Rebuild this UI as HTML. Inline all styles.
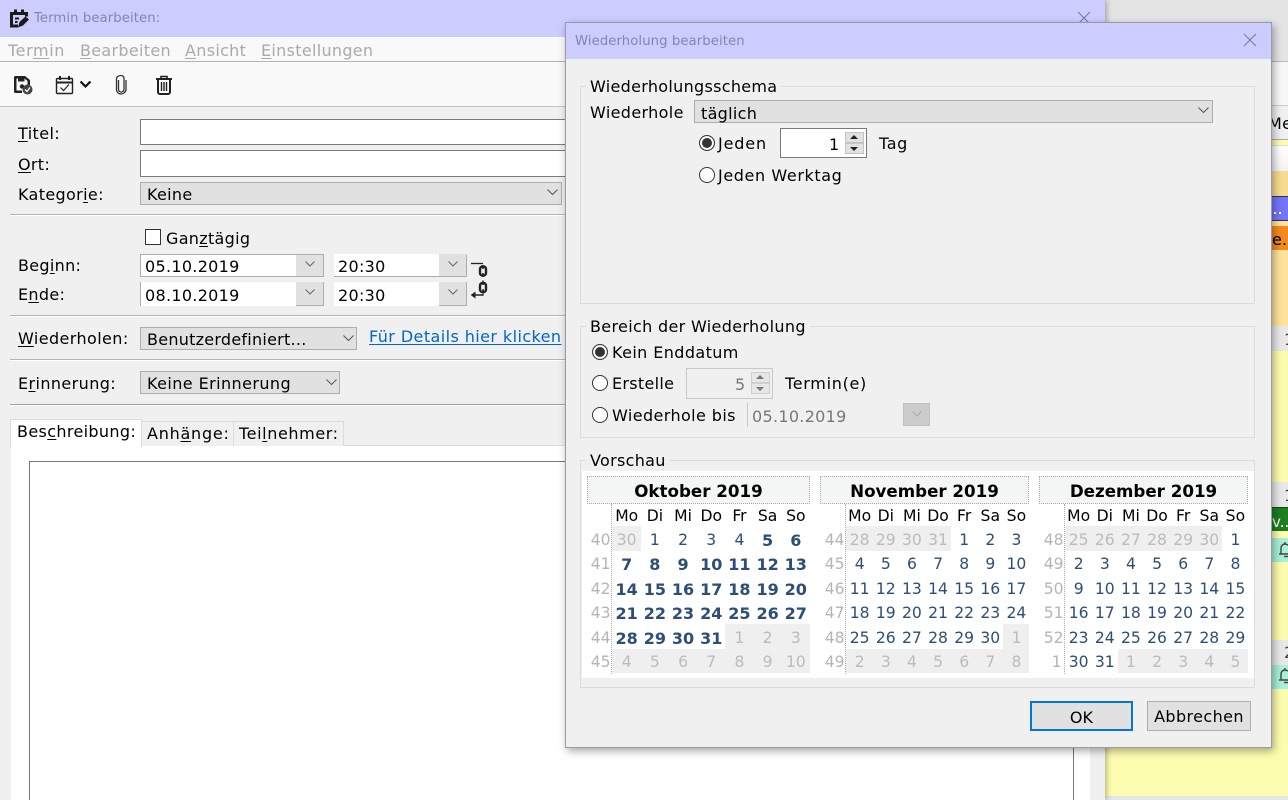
<!DOCTYPE html>
<html><head><meta charset="utf-8"><style>
html,body{margin:0;padding:0;width:1288px;height:800px;overflow:hidden;background:#fdfdb0}
body{position:relative;font-family:"DejaVu Sans","Liberation Sans",sans-serif;font-size:16px;color:#000}
.a,.t,.i{position:absolute}
.t{white-space:nowrap;line-height:20px;letter-spacing:.3px;margin-top:1px}
u{text-underline-offset:2px;text-decoration-thickness:1px}
.sel{position:absolute;box-sizing:border-box;background:#e1e1e1;border:1px solid #adadad}
.inp{position:absolute;box-sizing:border-box;background:#fff;border:1px solid #7a7a7a}
.line{position:absolute;height:1px;background:#b4b4b4;box-shadow:0 1px 0 #fff}
.gb{position:absolute;box-sizing:border-box;border:1px solid #dcdcdc}
.lg{position:absolute;background:#f0f0f0;padding:0 4px;height:20px;line-height:22px;white-space:nowrap;letter-spacing:.3px}
.mh{position:absolute;box-sizing:border-box;top:476px;height:28px;background:#f4f6f6;border:1px dotted #aaa;text-align:center;font-weight:bold;font-size:16.7px;line-height:28px;white-space:nowrap}
.vd{position:absolute;top:504px;height:170px;border-left:1px dotted #aaa}
.r{position:absolute;display:flex;height:24px;line-height:25px;font-size:15.6px;color:#2d4e75;white-space:nowrap;margin-left:.6px}
.r span{display:block;text-align:center;flex:none}
.r .w{position:absolute;left:-40px;width:38px;text-align:right;color:#b5b5b5}
.r .b{font-weight:bold;font-size:16px}
.r .g{color:#bbb}
.bg{position:absolute;background:#efefef}
.o span{width:28.2px}.n span{width:26.14px}
.rad{position:absolute;box-sizing:border-box;width:16px;height:16px;border:1px solid #333;border-radius:50%;background:#fff}
.rad.on{background:#333;box-shadow:inset 0 0 0 2px #fff}
</style></head><body>

<!-- right background window -->
<div class="a" style="left:1105px;top:0;width:183px;height:61px;background:#e4e4e4"></div>
<div class="a" style="left:1105px;top:61px;width:183px;height:1px;background:#bbb"></div>
<div class="a" style="left:1105px;top:62px;width:183px;height:43px;background:#f8f8f8"></div>
<div class="a" style="left:1105px;top:105px;width:183px;height:1px;background:#ccc"></div>
<div class="a" style="left:1105px;top:106px;width:183px;height:33px;background:#f0f0f0"></div>
<div class="t" style="left:1268px;top:113px">Me</div>
<div class="a" style="left:1105px;top:139px;width:183px;height:1px;background:#aaa"></div>
<div class="a" style="left:1105px;top:145px;width:183px;height:26px;background:linear-gradient(#fff,#f2f2f2);border-top:1px solid #ddd"></div>
<div class="a" style="left:1105px;top:171px;width:183px;height:155px;background:#fde49a"></div>
<div class="a" style="left:1105px;top:171px;width:183px;height:25px;background:#f5dc90"></div>
<div class="a" style="left:1271px;top:196px;width:17px;height:25px;background:#7474f8;box-sizing:border-box;border-top:1px solid #334;border-bottom:1px solid #334"></div>
<div class="a" style="left:1274px;top:212px;width:2px;height:2px;background:#fff"></div>
<div class="a" style="left:1279px;top:212px;width:2px;height:2px;background:#fff"></div>
<div class="a" style="left:1271px;top:226px;width:17px;height:24px;background:#f58a1c"></div>
<div class="t" style="left:1272px;top:229px;letter-spacing:0">e..</div>
<div class="a" style="left:1105px;top:326px;width:183px;height:25px;background:#e8e8e8"></div>
<div class="t" style="left:1284px;top:329px;color:#444">1</div>
<div class="a" style="left:1105px;top:351px;width:183px;height:445px;background:#fdfdb0"></div>
<div class="a" style="left:1105px;top:482px;width:183px;height:25px;background:#e8e8e8"></div>
<div class="t" style="left:1284px;top:485px;color:#444">1</div>
<div class="a" style="left:1271px;top:507px;width:17px;height:24px;background:#1f7e1f;border-top:1px solid #0a4a0a;box-sizing:border-box"></div>
<div class="t" style="left:1272px;top:511px;color:#fff;letter-spacing:0;font-size:15px">v..</div>
<div class="a" style="left:1271px;top:538px;width:17px;height:24px;background:#a8f0d8"></div>
<svg class="i" style="left:1278px;top:541px" width="10" height="18" viewBox="0 0 10 18" fill="none" stroke="#444" stroke-width="1.4"><path d="M1 13H10M3 13V7C3 4.500 5 3 7 3V1M7 3C8 3 9 3.500 10 4M6 15.500H10"/></svg>
<div class="a" style="left:1105px;top:640px;width:183px;height:25px;background:#e8e8e8"></div>
<div class="t" style="left:1284px;top:642px;color:#444">2</div>
<div class="a" style="left:1271px;top:665px;width:17px;height:24px;background:#a8f0d8"></div>
<svg class="i" style="left:1278px;top:667px" width="10" height="18" viewBox="0 0 10 18" fill="none" stroke="#444" stroke-width="1.4"><path d="M1 13H10M3 13V7C3 4.500 5 3 7 3V1M7 3C8 3 9 3.500 10 4M6 15.500H10"/></svg>
<div class="a" style="left:1105px;top:796px;width:183px;height:4px;background:#e6e6e6"></div>

<!-- main window -->
<div class="a" style="left:0;top:0;width:1105px;height:800px;background:#f0f0f0;box-shadow:1px 0 6px rgba(0,0,0,.35)"></div>
<div class="a" style="left:0;top:0;width:1105px;height:37px;background:#ccccff"></div>
<svg class="i" style="left:10px;top:9px" width="19" height="19" viewBox="0 0 19 19"><path d="M0 3H18V7.500H15V6H3V15.500H8V18.500H0Z" fill="#1a1a1a"/><rect x="4" y="0.500" width="3" height="4" fill="#1a1a1a"/><rect x="11" y="0.500" width="3" height="4" fill="#1a1a1a"/><path d="M8 18.500L9.500 13L15.500 7.500L19 10.500L13 16.500Z" fill="#1a1a1a"/><path d="M5 8.500H9V10.500H5ZM5 12H7.500V14H5Z" fill="#1a1a1a"/></svg>
<div class="t" style="left:34px;top:8px;font-size:13.2px;letter-spacing:.1px;color:#8585aa">Termin bearbeiten:</div>
<svg class="i" style="left:1077px;top:11px" width="14" height="14" stroke="#777799" fill="none"><path d="M1 1L13 13M13 1L1 13"/></svg>
<div class="a" style="left:0;top:37px;width:1105px;height:24px;background:#f9f9f9"></div>
<div class="a" style="left:0;top:61px;width:1105px;height:1px;background:#b4b4b4"></div>
<div class="a" style="left:0;top:62px;width:1105px;height:44px;background:#f9f9f9"></div>
<div class="a" style="left:0;top:106px;width:1105px;height:1px;background:#c4c4c4"></div>
<div class="t" style="left:8px;top:40px;color:#aaa;letter-spacing:.6px">Ter<u>m</u>in</div>
<div class="t" style="left:80px;top:40px;color:#aaa"><u>B</u>earbeiten</div>
<div class="t" style="left:185px;top:40px;color:#aaa"><u>A</u>nsicht</div>
<div class="t" style="left:261px;top:40px;color:#aaa"><u>E</u>instellungen</div>

<!-- toolbar icons -->
<svg class="i" style="left:13px;top:75px" width="20" height="20" viewBox="0 0 20 20"><path d="M2.500 1H12L17 5V10H14.500V6L11.500 3.500V6.500H5V3.500H3.500V15.500H9V18H2.500A1.500 1.500 0 0 1 1 16.500V2.500A1.500 1.500 0 0 1 2.500 1Z" fill="#222"/><circle cx="9" cy="11.500" r="2.200" fill="#222"/><circle cx="14.500" cy="14.500" r="5" fill="#444"/><path d="M12 14.500L14 16.500L17 12.500" fill="none" stroke="#fff" stroke-width="1.300"/></svg>
<svg class="i" style="left:55px;top:75px" width="19" height="20" viewBox="0 0 19 20" fill="none" stroke="#222"><path d="M2.500 3.500H16.500A1 1 0 0 1 17.500 4.500V17.500A1 1 0 0 1 16.500 18.500H2.500A1 1 0 0 1 1.500 17.500V4.500A1 1 0 0 1 2.500 3.500Z" stroke-width="1.400"/><path d="M1.500 7.500H17.500" stroke-width="2"/><path d="M5 1V5M14 1V5" stroke-width="2"/><path d="M5.500 12.500L8.500 15.500L14 9.500" stroke-width="1.200"/></svg>
<svg class="i" style="left:79px;top:80px" width="13" height="9" viewBox="0 0 13 9" fill="none" stroke="#111" stroke-width="2.200"><path d="M1.500 1.500L6.500 6.500L11.500 1.500"/></svg>
<svg class="i" style="left:114px;top:74px" width="14" height="21" viewBox="0 0 14 21" fill="none" stroke="#333" stroke-width="1.300"><path d="M4.500 6V15C4.500 17 5.500 18 7.200 18S10 17 10 15V4.500C10 2.500 8.800 1.500 7 1.500S2.500 2.500 2.500 5V15.500C2.500 18 4.500 20 7 20S12 18 12 15.500V6"/></svg>
<svg class="i" style="left:155px;top:75px" width="18" height="20" viewBox="0 0 18 20" fill="none" stroke="#222"><path d="M1 4H17" stroke-width="2"/><path d="M6 3.500V1.500H12V3.500" stroke-width="1.600"/><path d="M3 4.500V17A2 2 0 0 0 5 19H13A2 2 0 0 0 15 17V4.500" stroke-width="2"/><path d="M6.500 7V16M9 7V16M11.500 7V16" stroke-width="1.400"/></svg>

<!-- form -->
<div class="t" style="left:18px;top:123px;letter-spacing:.4px"><u>T</u>itel:</div>
<div class="inp" style="left:140px;top:119px;width:440px;height:26px"></div>
<div class="t" style="left:18px;top:154px"><u>O</u>rt:</div>
<div class="inp" style="left:140px;top:150px;width:440px;height:27px"></div>
<div class="t" style="left:18px;top:184px;letter-spacing:.35px">Kategor<u>i</u>e:</div>
<div class="sel" style="left:140px;top:182px;width:422px;height:23px"></div>
<div class="t" style="left:147px;top:184px">Keine</div>
<svg class="i" style="left:547px;top:189px" width="11" height="7" fill="none" stroke="#555"><path d="M.5 .5L5.500 5.500L10.500 .5"/></svg>
<div class="line" style="left:10px;top:214px;width:555px"></div>

<div class="a" style="left:145px;top:229px;width:16px;height:16px;box-sizing:border-box;border:1px solid #333;background:#fff"></div>
<div class="t" style="left:166px;top:228px">Gan<u>z</u>tägig</div>

<div class="t" style="left:18px;top:255px">Beg<u>i</u>nn:</div>
<div class="a" style="left:140px;top:254px;width:184px;height:23px;box-sizing:border-box;background:#fff;border:1px solid #adadad"></div>
<div class="a" style="left:296px;top:255px;width:27px;height:21px;background:#e1e1e1"></div>
<svg class="i" style="left:305px;top:261px" width="10" height="6" fill="none" stroke="#666"><path d="M.5 .5L5 5L9.500 .5"/></svg>
<div class="t" style="left:145px;top:256px">05.10.2019</div>
<div class="a" style="left:334px;top:254px;width:133px;height:23px;box-sizing:border-box;background:#fff;border:1px solid #adadad;border-left:0;border-top-color:#fff"></div>
<div class="a" style="left:439px;top:254px;width:27px;height:22px;background:#e1e1e1"></div>
<svg class="i" style="left:448px;top:261px" width="10" height="6" fill="none" stroke="#666"><path d="M.5 .5L5 5L9.500 .5"/></svg>
<div class="t" style="left:338px;top:256px">20:30</div>

<div class="t" style="left:18px;top:284px">E<u>n</u>de:</div>
<div class="a" style="left:140px;top:282px;width:184px;height:24px;box-sizing:border-box;background:#fff;border-left:1px solid #adadad"></div>
<div class="a" style="left:296px;top:282px;width:28px;height:24px;box-sizing:border-box;background:#e1e1e1;border:1px solid #adadad;border-left:0;border-top:0"></div>
<svg class="i" style="left:305px;top:289px" width="10" height="6" fill="none" stroke="#666"><path d="M.5 .5L5 5L9.500 .5"/></svg>
<div class="t" style="left:145px;top:285px">08.10.2019</div>
<div class="a" style="left:334px;top:282px;width:105px;height:24px;background:#fff"></div>
<div class="a" style="left:439px;top:282px;width:28px;height:24px;box-sizing:border-box;background:#e1e1e1;border:1px solid #adadad;border-left:0;border-top:0"></div>
<svg class="i" style="left:448px;top:289px" width="10" height="6" fill="none" stroke="#666"><path d="M.5 .5L5 5L9.500 .5"/></svg>
<div class="t" style="left:338px;top:285px">20:30</div>
<!-- chain icon -->
<svg class="i" style="left:470px;top:260px" width="20" height="40" viewBox="0 0 20 40" fill="none" stroke="#222"><path d="M1 3.500H13" stroke-width="1.300"/><rect x="10" y="6.500" width="6" height="9" rx="2.500" stroke-width="2.400"/><path d="M13 5V9M13 13V17" stroke-width="1.500"/><rect x="10" y="23" width="6" height="9" rx="2.500" stroke-width="2.400"/><path d="M13 20.500V25M13 29V33" stroke-width="1.500"/><path d="M13 33.500V35H3" stroke-width="1.400"/><path d="M5 32.500L1.500 35L5 37.500Z" fill="#222" stroke-width="1"/></svg>
<div class="line" style="left:10px;top:315px;width:555px"></div>

<div class="t" style="left:18px;top:328px;letter-spacing:.4px"><u>W</u>iederholen:</div>
<div class="sel" style="left:140px;top:327px;width:217px;height:23px"></div>
<div class="t" style="left:147px;top:329px;letter-spacing:.25px">Benutzerdefiniert...</div>
<svg class="i" style="left:343px;top:335px" width="11" height="7" fill="none" stroke="#555"><path d="M.5 .5L5.500 5.500L10.500 .5"/></svg>
<div class="t" style="left:369px;top:326px;color:#0066cc;letter-spacing:.42px"><u>Für Details hier klicken</u></div>
<div class="line" style="left:10px;top:359px;width:555px"></div>

<div class="t" style="left:18px;top:373px;letter-spacing:.4px">E<u>r</u>innerung:</div>
<div class="sel" style="left:140px;top:371px;width:200px;height:23px"></div>
<div class="t" style="left:147px;top:373px;letter-spacing:.42px">Keine Erinnerung</div>
<svg class="i" style="left:326px;top:379px" width="11" height="7" fill="none" stroke="#555"><path d="M.5 .5L5.500 5.500L10.500 .5"/></svg>
<div class="line" style="left:10px;top:404px;width:555px;background:#a0a0a0"></div>

<!-- tabs -->
<div class="a" style="left:11px;top:445px;width:1079px;height:355px;background:#fff;border-top:1px solid #dcdcdc"></div>
<div class="a" style="left:142px;top:421px;width:91px;height:24px;background:#f0f0f0;border-top:1px solid #dcdcdc"></div>
<div class="a" style="left:233px;top:421px;width:109px;height:24px;background:#f0f0f0;border:1px solid #dcdcdc;border-bottom:0"></div>
<div class="a" style="left:10px;top:419px;width:132px;height:28px;background:#fff;border:1px solid #dcdcdc;border-bottom:0;box-sizing:border-box"></div>
<div class="t" style="left:17px;top:421px;letter-spacing:.35px">Bes<u>c</u>hreibung:</div>
<div class="t" style="left:147px;top:423px;letter-spacing:.75px">Anh<u>ä</u>nge:</div>
<div class="t" style="left:239px;top:423px;letter-spacing:.6px">Tei<u>l</u>nehmer:</div>
<div class="a" style="left:29px;top:461px;width:1043px;height:339px;background:#fff;border:1px solid #777;border-bottom:0"></div>

<!-- dialog -->
<div class="a" style="left:565px;top:22px;width:705px;height:724px;background:#f0f0f0;border:1px solid #9a9aa8;box-shadow:2px 3px 8px rgba(0,0,0,.35)"></div>
<div class="a" style="left:566px;top:23px;width:705px;height:36px;background:#ccccff"></div>
<div class="t" style="left:575px;top:31px;font-size:13.2px;letter-spacing:.1px;color:#8585aa">Wiederholung bearbeiten</div>
<svg class="i" style="left:1243px;top:33px" width="14" height="14" stroke="#777799" fill="none"><path d="M1 1L13 13M13 1L1 13"/></svg>

<div class="gb" style="left:580px;top:86px;width:675px;height:218px"></div>
<div class="lg" style="left:586px;top:76px">Wiederholungsschema</div>
<div class="t" style="left:590px;top:102px;letter-spacing:.35px">Wiederhole</div>
<div class="sel" style="left:694px;top:100px;width:519px;height:23px"></div>
<div class="t" style="left:701px;top:103px">täglich</div>
<svg class="i" style="left:1198px;top:107px" width="11" height="7" fill="none" stroke="#555"><path d="M.5 .5L5.500 5.500L10.500 .5"/></svg>
<div class="rad on" style="left:699px;top:135px"></div>
<div class="t" style="left:718px;top:133px;letter-spacing:.85px">Jeden</div>
<div class="inp" style="left:780px;top:128px;width:87px;height:30px"></div>
<div class="t" style="left:829px;top:134px">1</div>
<div class="a" style="left:845px;top:132px;width:17px;height:9px;background:#e1e1e1;border:1px solid #c4c4c4"></div>
<div class="a" style="left:845px;top:143px;width:17px;height:9px;background:#e1e1e1;border:1px solid #c4c4c4"></div>
<svg class="i" style="left:849px;top:134px" width="10" height="18"><path d="M5 1L9 5H1Z M1 13H9L5 17Z" fill="#222"/></svg>
<div class="t" style="left:879px;top:133px;letter-spacing:.6px">Tag</div>
<div class="rad" style="left:699px;top:167px"></div>
<div class="t" style="left:718px;top:165px;letter-spacing:.6px">Jeden Werktag</div>

<div class="gb" style="left:580px;top:326px;width:675px;height:112px"></div>
<div class="lg" style="left:586px;top:316px;letter-spacing:.33px">Bereich der Wiederholung</div>
<div class="rad on" style="left:592px;top:344px"></div>
<div class="t" style="left:612px;top:342px;letter-spacing:.4px">Kein Enddatum</div>
<div class="rad" style="left:592px;top:375px"></div>
<div class="t" style="left:612px;top:373px">Erstelle</div>
<div class="a" style="left:686px;top:368px;width:85px;height:29px;border:1px solid #c8c8c8;background:#f0f0f0"></div>
<div class="t" style="left:735px;top:374px;color:#777">5</div>
<div class="a" style="left:751px;top:372px;width:17px;height:9px;background:#e6e6e6;border:1px solid #cfcfcf"></div>
<div class="a" style="left:751px;top:383px;width:17px;height:9px;background:#e6e6e6;border:1px solid #cfcfcf"></div>
<svg class="i" style="left:755px;top:374px" width="10" height="18"><path d="M5 1L9 5H1Z M1 13H9L5 17Z" fill="#777"/></svg>
<div class="t" style="left:785px;top:373px;letter-spacing:.7px">Termin(e)</div>
<div class="rad" style="left:592px;top:407px"></div>
<div class="t" style="left:612px;top:405px;letter-spacing:.4px">Wiederhole bis</div>
<div class="a" style="left:747px;top:403px;width:1px;height:24px;background:#c8c8c8"></div>
<div class="t" style="left:752px;top:406px;color:#777">05.10.2019</div>
<div class="a" style="left:903px;top:403px;width:27px;height:23px;background:#cccccc;box-shadow:inset 0 0 0 1px #c0c0c0"></div>
<svg class="i" style="left:912px;top:411px" width="10" height="6" fill="none" stroke="#aaa"><path d="M.5 .5L5 5L9.500 .5"/></svg>

<div class="gb" style="left:580px;top:460px;width:675px;height:228px"></div>
<div class="lg" style="left:586px;top:450px">Vorschau</div>
<div class="a" style="left:582px;top:471px;width:672px;height:207px;background:#fff"></div>

<div class="mh" style="left:587px;width:223px;line-height:29px">Oktober 2019</div>
<div class="mh" style="left:820px;width:209px;line-height:29px">November 2019</div>
<div class="mh" style="left:1039px;width:209px;line-height:29px">Dezember 2019</div>
<div class="vd" style="left:611px"></div><div class="vd" style="left:845px"></div><div class="vd" style="left:1064px"></div>

<div class="bg" style="left:612px;top:526px;width:29px;height:25px"></div>
<div class="bg" style="left:725px;top:624px;width:85px;height:25px"></div>
<div class="bg" style="left:612px;top:649px;width:198px;height:24px"></div>
<div class="bg" style="left:846px;top:526px;width:105px;height:25px"></div>
<div class="bg" style="left:1003px;top:624px;width:26px;height:25px"></div>
<div class="bg" style="left:846px;top:649px;width:183px;height:24px"></div>
<div class="bg" style="left:1065px;top:526px;width:157px;height:25px"></div>
<div class="bg" style="left:1118px;top:649px;width:130px;height:24px"></div>

<!-- Oktober -->
<div class="r o" style="left:612px;top:504px;color:#000"><span>Mo</span><span>Di</span><span>Mi</span><span>Do</span><span>Fr</span><span>Sa</span><span>So</span></div>
<div class="r o" style="left:612px;top:528px"><span class="w">40</span><span class="g">30</span><span>1</span><span>2</span><span>3</span><span>4</span><span class="b">5</span><span class="b">6</span></div>
<div class="r o" style="left:612px;top:552px"><span class="w">41</span><span class="b">7</span><span class="b">8</span><span class="b">9</span><span class="b">10</span><span class="b">11</span><span class="b">12</span><span class="b">13</span></div>
<div class="r o" style="left:612px;top:577px"><span class="w">42</span><span class="b">14</span><span class="b">15</span><span class="b">16</span><span class="b">17</span><span class="b">18</span><span class="b">19</span><span class="b">20</span></div>
<div class="r o" style="left:612px;top:601px"><span class="w">43</span><span class="b">21</span><span class="b">22</span><span class="b">23</span><span class="b">24</span><span class="b">25</span><span class="b">26</span><span class="b">27</span></div>
<div class="r o" style="left:612px;top:626px"><span class="w">44</span><span class="b">28</span><span class="b">29</span><span class="b">30</span><span class="b">31</span><span class="g">1</span><span class="g">2</span><span class="g">3</span></div>
<div class="r o" style="left:612px;top:650px"><span class="w">45</span><span class="g">4</span><span class="g">5</span><span class="g">6</span><span class="g">7</span><span class="g">8</span><span class="g">9</span><span class="g">10</span></div>

<!-- November -->
<div class="r n" style="left:846px;top:504px;color:#000"><span>Mo</span><span>Di</span><span>Mi</span><span>Do</span><span>Fr</span><span>Sa</span><span>So</span></div>
<div class="r n" style="left:846px;top:528px"><span class="w">44</span><span class="g">28</span><span class="g">29</span><span class="g">30</span><span class="g">31</span><span>1</span><span>2</span><span>3</span></div>
<div class="r n" style="left:846px;top:552px"><span class="w">45</span><span>4</span><span>5</span><span>6</span><span>7</span><span>8</span><span>9</span><span>10</span></div>
<div class="r n" style="left:846px;top:577px"><span class="w">46</span><span>11</span><span>12</span><span>13</span><span>14</span><span>15</span><span>16</span><span>17</span></div>
<div class="r n" style="left:846px;top:601px"><span class="w">47</span><span>18</span><span>19</span><span>20</span><span>21</span><span>22</span><span>23</span><span>24</span></div>
<div class="r n" style="left:846px;top:626px"><span class="w">48</span><span>25</span><span>26</span><span>27</span><span>28</span><span>29</span><span>30</span><span class="g">1</span></div>
<div class="r n" style="left:846px;top:650px"><span class="w">49</span><span class="g">2</span><span class="g">3</span><span class="g">4</span><span class="g">5</span><span class="g">6</span><span class="g">7</span><span class="g">8</span></div>

<!-- Dezember -->
<div class="r n" style="left:1065px;top:504px;color:#000"><span>Mo</span><span>Di</span><span>Mi</span><span>Do</span><span>Fr</span><span>Sa</span><span>So</span></div>
<div class="r n" style="left:1065px;top:528px"><span class="w">48</span><span class="g">25</span><span class="g">26</span><span class="g">27</span><span class="g">28</span><span class="g">29</span><span class="g">30</span><span>1</span></div>
<div class="r n" style="left:1065px;top:552px"><span class="w">49</span><span>2</span><span>3</span><span>4</span><span>5</span><span>6</span><span>7</span><span>8</span></div>
<div class="r n" style="left:1065px;top:577px"><span class="w">50</span><span>9</span><span>10</span><span>11</span><span>12</span><span>13</span><span>14</span><span>15</span></div>
<div class="r n" style="left:1065px;top:601px"><span class="w">51</span><span>16</span><span>17</span><span>18</span><span>19</span><span>20</span><span>21</span><span>22</span></div>
<div class="r n" style="left:1065px;top:626px"><span class="w">52</span><span>23</span><span>24</span><span>25</span><span>26</span><span>27</span><span>28</span><span>29</span></div>
<div class="r n" style="left:1065px;top:650px"><span class="w" style="left:-42px">1</span><span>30</span><span>31</span><span class="g">1</span><span class="g">2</span><span class="g">3</span><span class="g">4</span><span class="g">5</span></div>

<!-- buttons -->
<div class="a" style="left:1030px;top:701px;width:103px;height:30px;box-sizing:border-box;background:#e1e1e1;border:2px solid #0078d7;text-align:center;line-height:29px;letter-spacing:.1px">OK</div>
<div class="a" style="left:1147px;top:701px;width:104px;height:30px;box-sizing:border-box;background:#e1e1e1;border:1px solid #adadad;text-align:center;line-height:29px;letter-spacing:.4px">Abbrechen</div>
</body></html>
